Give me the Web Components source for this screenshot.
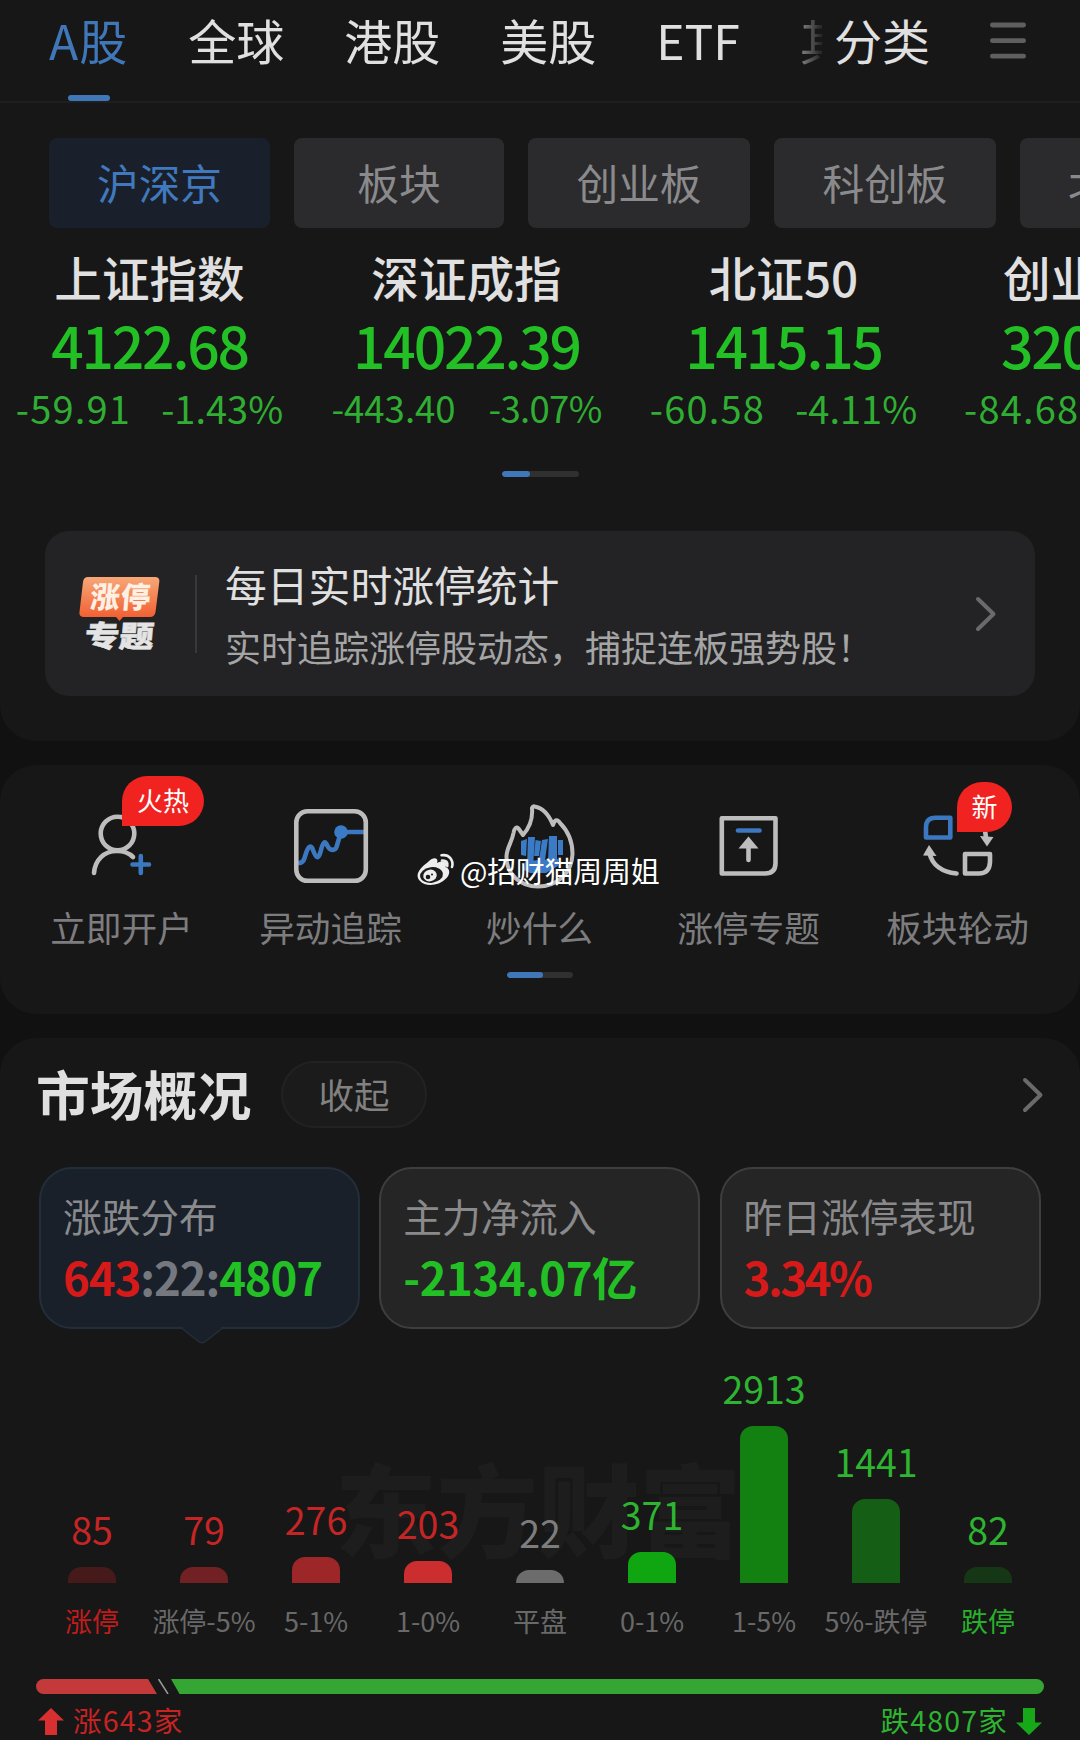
<!DOCTYPE html>
<html lang="zh-CN">
<head>
<meta charset="utf-8">
<title>行情</title>
<style>
  html, body {
    margin: 0;
    background: #111;
  }
  body {
    width: 1080px;
    height: 1740px;
    overflow: hidden;
    font-family: "Noto Sans CJK SC", sans-serif;
    color: #e0e0e0;
    --blue: #3f77b8;
    --up: #d61a1a;
    --down: #22c025;
    --muted: #8a8a8c;
  }
</style>
</head>
<body>
<market-page></market-page>

<script>
function define(name, html) {
  customElements.define(name, class extends HTMLElement {
    constructor() {
      super();
      this.attachShadow({ mode: 'open' });
      this.shadowRoot.innerHTML = html;
    }
  });
}

// rounded block that holds one part of the page
define('page-panel', `
<style>
  :host {
    display: flex;
    flex-direction: column;
    box-sizing: border-box;
    background: #171717;
    border-radius: 36px;
    margin-bottom: 24px;
    overflow: hidden;
  }
  :host([first]) { border-radius: 0 0 36px 36px; }
  :host([last]) { border-radius: 36px 36px 0 0; margin-bottom: 0; }
</style>
<slot></slot>
`);

define('top-tabs', `
<style>
  :host {
    display: flex;
    height: 101px;
    border-bottom: 2px solid #1f1f1f;
    font-size: 48px;
    line-height: 79px;
    white-space: nowrap;
  }
  .scroll {
    display: flex;
    gap: 60px;
    width: 773px;
    padding-left: 49px;
    overflow: hidden;
    -webkit-mask-image: linear-gradient(90deg, #000 780px, rgba(0,0,0,.1) 820px);
    mask-image: linear-gradient(90deg, #000 780px, rgba(0,0,0,.1) 820px);
  }
  .active { color: var(--blue); letter-spacing: 1px; }
  .active::after {
    content: "";
    display: block;
    width: 42px;
    height: 6.5px;
    margin: 15.5px auto 0;
    border-radius: 3px;
    background: var(--blue);
  }
  .more { margin-left: 12px; }
  svg { margin: 22px 0 0 60px; }
</style>
<div class="scroll">
  <span class="active">A股</span><span>全球</span><span>港股</span><span>美股</span><span>ETF</span><span>其</span>
</div>
<span class="more">分类</span>
<svg width="36" height="38" stroke="#5f5f5f" stroke-width="4.8" stroke-linecap="round">
  <path d="M2.4 3H33.6M2.4 18.7H33.6M2.4 34.2H33.6"/>
</svg>
`);

define('chip-button', `
<style>
  :host {
    flex: none;
    box-sizing: border-box;
    width: 222px;
    height: 90px;
    border-radius: 8px;
    background: #2b2b2d;
    color: var(--muted);
    font-size: 41.7px;
    line-height: 88px;
    text-align: center;
  }
  :host([narrow]) { width: 210px; }
  :host([active]) { width: 221px; background: #19202b; color: #4079bd; }
  :host([cut]) { text-align: left; padding-left: 48px; }
</style>
<slot></slot>
`);

define('index-quote', `
<style>
  :host {
    flex: none;
    display: flex;
    flex-direction: column;
    align-items: center;
    width: 317px;
    white-space: nowrap;
    color: var(--down);
  }
  .name { color: #e0e0e0; font-size: 47.6px; line-height: 56px; font-weight: 500; }
  .value { margin-top: 6px; font-size: 57px; line-height: 66px; font-weight: 500; letter-spacing: -2.2px; }
  .change { display: flex; gap: 30px; margin-top: 6px; font-size: 38px; line-height: 50px; color: #2fae33; }
  ::slotted(.diff) { letter-spacing: 1.2px; }
  :host([small]) .change { font-size: 36.5px; gap: 33px; letter-spacing: -.7px; }
  :host([small]) ::slotted(.diff) { letter-spacing: 0; }
  :host([cut]) { align-items: flex-start; }
  :host([cut]) .name { margin-left: 61px; }
  :host([cut]) .value { margin-left: 59px; }
  :host([cut]) .change { margin-left: 22px; }
</style>
<div class="name"><slot name="name"></slot></div>
<div class="value"><slot name="value"></slot></div>
<div class="change"><slot></slot></div>
`);

define('scroll-bar', `
<style>
  :host {
    display: block;
    align-self: center;
    width: var(--w);
    height: 6px;
    border-radius: 3px;
    background: #303030;
    overflow: hidden;
  }
  div { width: var(--on); height: 6px; border-radius: 3px; background: var(--blue); }
</style>
<div></div>
`);

define('arrow-right', `
<style>
  :host { display: block; flex: none; line-height: 0; }
</style>
<svg width="22" height="36" fill="none" stroke="#6a6a6a" stroke-width="4" stroke-linecap="round" stroke-linejoin="round">
  <path d="M3 3L18.5 18L3 33"/>
</svg>
`);

define('promo-card', `
<style>
  :host {
    display: flex;
    align-items: center;
    box-sizing: border-box;
    height: 165px;
    margin: 54px 45px 0;
    padding: 0 38px 0 34px;
    border-radius: 24px;
    background: #232325;
  }
  .line { width: 2px; height: 78px; margin: 0 28px 0 35px; background: #38383a; }
  .text { flex: 1; white-space: nowrap; }
  .title { margin-top: 3px; font-size: 41.8px; line-height: 60px; }
  .sub { margin-top: 2px; font-size: 36px; line-height: 60px; color: #a5a5a6; }
</style>
<svg width="81" height="78" viewBox="0 0 81 78">
  <defs>
    <linearGradient id="g" x1="0" y1="0" x2="0" y2="1">
      <stop offset="0" stop-color="#f7a777"/>
      <stop offset="1" stop-color="#f15a2c"/>
    </linearGradient>
  </defs>
  <path fill="url(#g)" d="M9 2H76Q81 2 80.3 7L76.5 37Q75.7 42 71 42H44L40.5 46L37 42H5Q-.2 42 .5 37L4 7Q4.6 2 9 2Z"/>
  <g font-weight="900" font-size="29.5">
    <text fill="#fff0e4" transform="translate(10.5 33) skewX(-5)" textLength="60">涨停</text>
    <text fill="#e4e4e4" stroke="#e4e4e4" stroke-width=".6" transform="translate(5 71.5) skewX(-5)" textLength="69" lengthAdjust="spacingAndGlyphs">专题</text>
  </g>
</svg>
<div class="line"></div>
<div class="text">
  <div class="title"><slot name="title"></slot></div>
  <div class="sub"><slot></slot></div>
</div>
<arrow-right></arrow-right>
`);

define('tool-item', `
<style>
  :host {
    position: relative;
    display: flex;
    flex-direction: column;
    align-items: center;
    width: 209px;
  }
  .label { margin-top: 12px; font-size: 35.7px; line-height: 50px; color: #7d7d7f; white-space: nowrap; }
  ::slotted([slot=icon]) { margin-left: -2px; }
  ::slotted([slot=badge]) {
    position: absolute;
    top: -24px;
    left: 105px;
    width: 82px;
    height: 50px;
    border-radius: 25px 25px 25px 0;
    background: #f02320;
    color: #fff;
    font-size: 26px;
    line-height: 48px;
    text-align: center;
  }
  ::slotted(.new) { top: -18px !important; left: 104px !important; width: 55px !important; }
</style>
<slot name="icon"></slot>
<span class="label"><slot></slot></span>
<slot name="badge"></slot>
`);

define('author-mark', `
<style>
  :host {
    position: absolute;
    left: 416px;
    top: 850px;
    display: flex;
    gap: 5px;
    color: #fff;
    font-size: 29px;
    line-height: 40px;
    letter-spacing: -.3px;
    white-space: nowrap;
  }
</style>
<svg width="39" height="36" viewBox="0 0 39 36">
  <path fill="#eee" d="M12 12C18 6 23 8 21 13C28 9 32 12 29.5 17C35 19 34 25 29.5 29C23 36 9 37 4 31C-2 25 4 18 12 12Z"/>
  <ellipse cx="15.5" cy="25" rx="11.5" ry="7.8" fill="#1b1b1b" transform="rotate(-8 15.5 25)"/>
  <ellipse cx="14" cy="25.5" rx="6.8" ry="5.8" fill="#eee" transform="rotate(-15 14 25.5)"/>
  <circle cx="12" cy="27" r="2.3" fill="#1b1b1b"/>
  <circle cx="16" cy="24.5" r="1" fill="#1b1b1b"/>
  <path fill="none" stroke="#eee" stroke-width="2.6" stroke-linecap="round" d="M25.5 5.3C33 4 38 10 36 17M26 10.5C30 10 32 12.5 31.3 16"/>
</svg>
<span><slot></slot></span>
`);

define('overview-head', `
<style>
  :host { display: flex; height: 67px; margin: 23px 36px 0 36px; }
  .title { width: 215px; font-size: 53.8px; line-height: 64px; font-weight: 700; white-space: nowrap; }
  .pill {
    box-sizing: border-box;
    width: 146px;
    margin: 0 auto 0 30px;
    border: 2px solid #222;
    border-radius: 34px;
    background: #1b1b1b;
    color: #818181;
    font-size: 35.5px;
    line-height: 62px;
    text-align: center;
  }
  arrow-right { margin-top: 16px; }
</style>
<span class="title"><slot></slot></span>
<span class="pill"><slot name="toggle"></slot></span>
<arrow-right></arrow-right>
`);

define('stat-card', `
<style>
  :host {
    position: relative;
    box-sizing: border-box;
    height: 162px;
    padding: 21px 0 0 22px;
    border: 2px solid #3e3e3e;
    border-radius: 33px;
    background: #252525;
    white-space: nowrap;
  }
  :host([active]) { border-color: #232e3b; background: #19202a; }
  .label { font-size: 38.7px; line-height: 50px; color: var(--muted); }
  .value {
    margin-top: 6px;
    font-size: 45.5px;
    line-height: 60px;
    font-weight: 700;
    letter-spacing: var(--tight, -1.1px);
  }
  svg { display: none; position: absolute; left: 140px; top: 157px; }
  :host([active]) svg { display: block; }
</style>
<div class="label"><slot name="label"></slot></div>
<div class="value"><slot></slot></div>
<svg width="44" height="18"><path d="M1 2.5L17 15Q21 18.5 25 15L41 2.5" fill="#19202a" stroke="#232e3b" stroke-width="1.5"/><path d="M2 0H40V3H2Z" fill="#19202a"/></svg>
`);

// 涨跌分布 columns: [count, label, bar height, bar colour, text colour, label colour]
const columns = [
  [85, '涨停', 16, '#46191b', '#c62525', '#c01c1c'],
  [79, '涨停-5%', 16, '#712023', '#c62525', '#696969'],
  [276, '5-1%', 26, '#9c2628', '#c62525', '#696969'],
  [203, '1-0%', 22, '#cc2d2e', '#c62525', '#696969'],
  [22, '平盘', 13, '#6c6c6c', '#7d7d7d', '#696969'],
  [371, '0-1%', 31, '#10a612', '#2eb431', '#696969'],
  [2913, '1-5%', 157, '#138112', '#2eb431', '#696969'],
  [1441, '5%-跌停', 84, '#145f15', '#2eb431', '#696969'],
  [82, '跌停', 16, '#163716', '#2eb431', '#28b02b']
];

class SpreadChart extends HTMLElement {
  constructor() {
    super();
    this.attachShadow({ mode: 'open' });
    this.shadowRoot.innerHTML = `
<style>
  :host {
    position: relative;
    display: grid;
    grid-template-columns: repeat(9, 112px);
    height: 307px;
    margin: 0 36px;
    white-space: nowrap;
  }
  .mark {
    position: absolute;
    left: 299px;
    top: 107px;
    font-size: 101.5px;
    line-height: 140px;
    font-weight: 900;
    color: #1d1d1d;
  }
  .col { position: relative; display: flex; flex-direction: column; align-items: center; justify-content: flex-end; }
  .num { font-size: 37.5px; line-height: 40px; margin-bottom: 18.5px; }
  .bar { width: 48px; border-radius: 13px 13px 0 0; }
  .label { margin: 22px 0 -1px; font-size: 27px; line-height: 31px; }
</style>
<div class="mark">东方财富</div>
${columns.map(([n, label, h, bar, text, sub]) => `
<div class="col">
  <span class="num" style="color:${text}">${n}</span>
  <div class="bar" style="height:${h}px;background:${bar}"></div>
  <span class="label" style="color:${sub}">${label}</span>
</div>`).join('')}
`;
  }
}
customElements.define('spread-chart', SpreadChart);

define('ratio-bar', `
<style>
  :host { display: block; margin: 44px 36px 0; }
  svg { display: block; }
  .foot {
    display: flex;
    align-items: center;
    margin-top: 6px;
    font-size: 28.5px;
    line-height: 40px;
    letter-spacing: 1.2px;
  }
  .up { margin-left: 7px; color: #c62323; }
  .down { margin: 0 6px 0 auto; color: #2eb431; }
  .foot svg { margin: 3px 2px 0; }
</style>
<svg width="1008" height="15">
  <path fill="#c43a3a" d="M7.5 0H112L121 15H7.5A7.5 7.5 0 0 1 7.5 0Z"/>
  <path stroke="#9a9a9a" stroke-width="1.5" d="M122.500 0L132 15"/>
  <path fill="#35a534" d="M135 0H1000.5A7.5 7.5 0 0 1 1000.5 15H143.5Z"/>
</svg>
<div class="foot">
  <svg width="26" height="27"><path fill="#d83030" d="M13 0L26 12.5H19V27H7V12.5H0Z"/></svg>
  <span class="up"><slot name="up"></slot></span>
  <span class="down"><slot name="down"></slot></span>
  <svg width="26" height="27"><path fill="#16a818" d="M13 27L26 14.5H19V0H7V14.5H0Z"/></svg>
</div>
`);

define('market-page', `
<style>
  :host { position: relative; display: block; width: 1080px; height: 1740px; overflow: hidden; }
  .chips { display: flex; gap: 24px; margin: 35px 0 0 49px; }
  .quotes { display: flex; margin: 20.5px 0 38.5px -9px; }
  .tools { display: flex; padding: 35px 17px 0; margin-bottom: 20px; }
  .stats { display: grid; grid-template-columns: repeat(3, 321px); gap: 19.3px; margin: 39px 39px 0; }
  .tools svg { fill: none; stroke: #bdbdbd; stroke-width: 4.6; stroke-linecap: round; stroke-linejoin: round; }
  .tools .b { stroke: #3b78bf; }
  .tools .bf { fill: #3b7ac4; stroke: none; }
  .tools .wf { fill: #bdbdbd; stroke: none; }
  .r { color: var(--up); }
  .g { color: var(--down); }
  .n { color: #75787e; }
</style>

<page-panel first style="height:741px">
  <top-tabs></top-tabs>
  <div class="chips">
    <chip-button active>沪深京</chip-button>
    <chip-button narrow>板块</chip-button>
    <chip-button>创业板</chip-button>
    <chip-button>科创板</chip-button>
    <chip-button cut>北</chip-button>
  </div>
  <div class="quotes">
    <index-quote>
      <span slot="name">上证指数</span><span slot="value">4122.68</span>
      <span class="diff">-59.91</span><span>-1.43%</span>
    </index-quote>
    <index-quote small>
      <span slot="name">深证成指</span><span slot="value">14022.39</span>
      <span class="diff">-443.40</span><span>-3.07%</span>
    </index-quote>
    <index-quote>
      <span slot="name">北证50</span><span slot="value">1415.15</span>
      <span class="diff">-60.58</span><span>-4.11%</span>
    </index-quote>
    <index-quote cut>
      <span slot="name">创业</span><span slot="value">320</span>
      <span class="diff">-84.68</span>
    </index-quote>
  </div>
  <scroll-bar style="--w:77px;--on:28px"></scroll-bar>
  <promo-card>
    <span slot="title">每日实时涨停统计</span>
    实时追踪涨停股动态，捕捉连板强势股！
  </promo-card>
</page-panel>

<page-panel style="height:249px">
  <div class="tools">
    <tool-item>
      <svg slot="icon" width="90" height="90">
        <circle cx="41.5" cy="33.5" r="16.8"/>
        <path d="M18 73C19 60 28 51 41 51C48 51 53 53 57 57"/>
        <path class="b" d="M56.5 64.5H73M64.8 56V73"/>
      </svg>
      立即开户
      <span slot="badge">火热</span>
    </tool-item>
    <tool-item>
      <svg slot="icon" width="90" height="90">
        <path class="b" d="M14 63C18 63 19 60 20.5 55C23 46 26 44 28 50C31 58 33 60 35.5 52C37.5 43 40 39 42.5 46C45 51 50 51 51.5 47L56 32H80"/>
        <rect x="11.3" y="11.3" width="69.5" height="69.5" rx="11"/>
        <circle class="bf" cx="56" cy="32" r="6.8"/>
      </svg>
      异动追踪
    </tool-item>
    <tool-item>
      <svg slot="icon" width="90" height="90">
        <path stroke-width="4" d="M40.5 6.5C49 8 55 15 59 25C61 19 63.5 19 66 23C74 31 78.5 42 78.5 54C78 74 62 86.5 44 86.5C26 86.5 12 74 12.5 56C13 47 18 42 19.5 33C20 28 23 26 24.5 28.5L29 35C36 27 39 19 38 8Q39 6 40.5 6.5Z"/>
        <g class="bf">
          <path d="M27 41L33 39L32 56L27 55ZM34 37H41L39 67H33ZM41.500 40L47 41L45 56H40ZM48 40L54 39L51 60H45ZM55 36H63V62H54ZM64 40H69V55H64Z"/>
          <path d="M31 61L64 59V66L52 73H36L30 70Z"/>
        </g>
      </svg>
      炒什么
    </tool-item>
    <tool-item>
      <svg slot="icon" width="90" height="90">
        <path d="M18.8 18.3H72.5V63Q72.5 73.5 62 73.5H18.8Z"/>
        <path class="b" d="M35 30.5H56.5"/>
        <path d="M45.5 60V42"/>
        <path class="wf" d="M45.5 36.5L55.5 48.5H35.5Z"/>
      </svg>
      涨停专题
    </tool-item>
    <tool-item>
      <svg slot="icon" width="90" height="90">
        <path class="b" d="M14 37.5H38.3V17.7H23.5Q14 18 14 27Z"/>
        <path d="M53 54H78V62Q77.5 73.5 67 73.5H53Z"/>
        <path d="M17.5 53C20 65 30 72 44.5 73.5"/>
        <path class="wf" d="M17 45L24.5 56L11 55.5Z"/>
        <path d="M73 30L74 38"/>
        <path class="wf" d="M75 46.5L68 36L81.5 37Z"/>
      </svg>
      板块轮动
      <span slot="badge" class="new">新</span>
    </tool-item>
  </div>
  <scroll-bar style="--w:66px;--on:36px"></scroll-bar>
</page-panel>

<page-panel last style="height:702px">
  <overview-head>市场概况<span slot="toggle">收起</span></overview-head>
  <div class="stats">
    <stat-card active>
      <span slot="label">涨跌分布</span><span class="r">643</span><span class="n">:22:</span><span class="g">4807</span>
    </stat-card>
    <stat-card style="--tight:-.5px">
      <span slot="label">主力净流入</span><span class="g">-2134.07亿</span>
    </stat-card>
    <stat-card style="--tight:-2.5px">
      <span slot="label">昨日涨停表现</span><span class="r">3.34%</span>
    </stat-card>
  </div>
  <spread-chart></spread-chart>
  <ratio-bar><span slot="up">涨643家</span><span slot="down">跌4807家</span></ratio-bar>
</page-panel>

<author-mark>@招财猫周周姐</author-mark>
`);
</script>
</body>
</html>
